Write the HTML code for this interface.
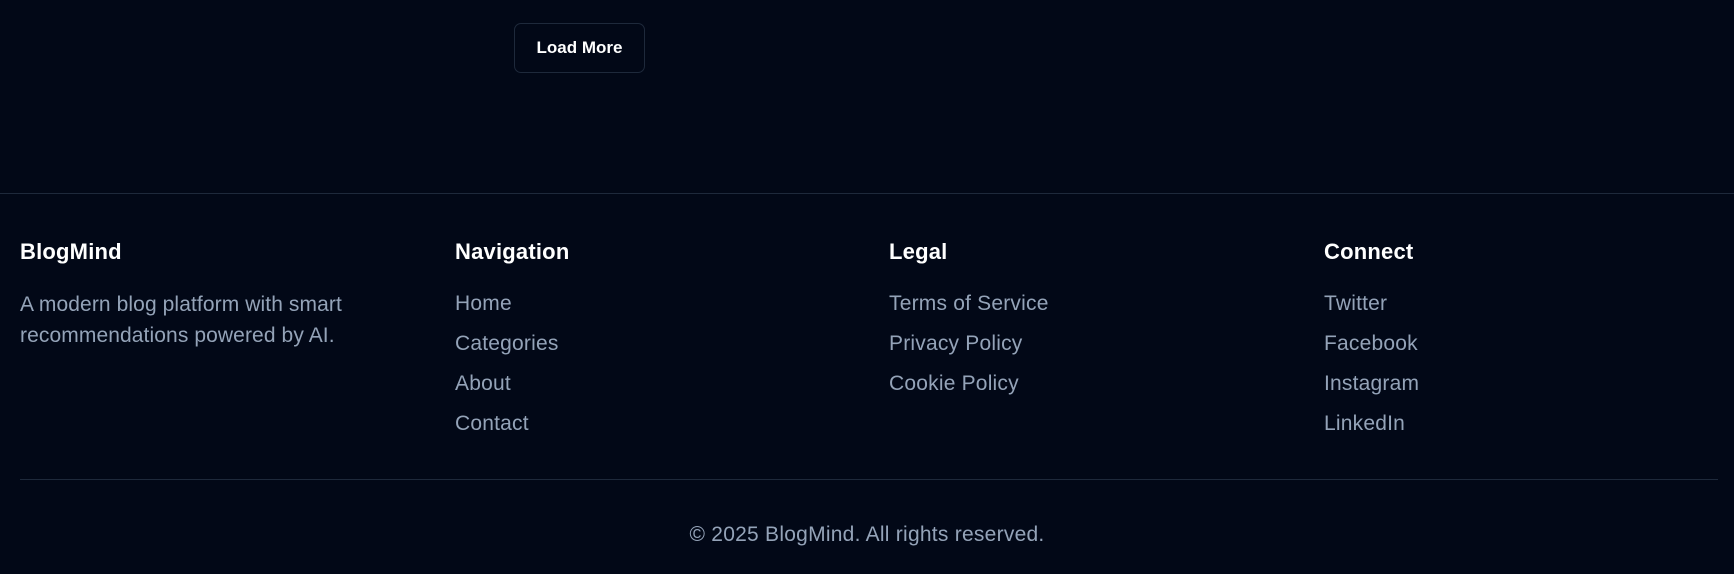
<!DOCTYPE html>
<html><head><meta charset="utf-8"><style>
*{margin:0;padding:0;box-sizing:border-box}
body{width:1734px;height:574px;background:#020817;font-family:"Liberation Sans",sans-serif;position:relative;overflow:hidden;color:#94a3b8}
.btn{position:absolute;left:514px;top:23px;width:131px;height:50px;border:1px solid #1e293b;border-radius:7px;color:#fff;font-weight:bold;font-size:17px;display:flex;align-items:center;justify-content:center}
.hr1{position:absolute;left:0;right:0;top:193px;height:1px;background:#1e293b}
.col{position:absolute;top:238px;width:420px}
.col h3{color:#fff;font-size:22px;font-weight:bold;line-height:28px;margin-bottom:26px;letter-spacing:0.2px}
.col a{display:block;font-size:21px;line-height:24px;margin-bottom:16px;color:#94a3b8;text-decoration:none;letter-spacing:0.2px}
.col p{font-size:21px;line-height:31px;margin-top:-3px;letter-spacing:0.1px}
.hr2{position:absolute;left:20px;width:1698px;top:479px;height:1px;background:#1e293b}
.copy{position:absolute;left:0;right:0;top:523px;text-align:center;font-size:21px;line-height:24px;letter-spacing:0.25px}
</style></head><body>
<div class="btn">Load More</div>
<div class="hr1"></div>
<div class="col" style="left:20px"><h3>BlogMind</h3><p>A modern blog platform with smart recommendations powered by AI.</p></div>
<div class="col" style="left:455px"><h3>Navigation</h3><a>Home</a><a>Categories</a><a>About</a><a>Contact</a></div>
<div class="col" style="left:889px"><h3>Legal</h3><a>Terms of Service</a><a>Privacy Policy</a><a>Cookie Policy</a></div>
<div class="col" style="left:1324px"><h3>Connect</h3><a>Twitter</a><a>Facebook</a><a>Instagram</a><a>LinkedIn</a></div>
<div class="hr2"></div>
<div class="copy">© 2025 BlogMind. All rights reserved.</div>
</body></html>
